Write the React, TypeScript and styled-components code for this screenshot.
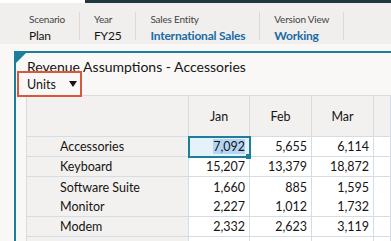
import React from "react";
import styled, { createGlobalStyle } from "styled-components";

const GlobalStyle = createGlobalStyle`
  html, body {
    margin: 0;
    padding: 0;
    background: #f9f8f6;
    font-family: Lato, "Noto Sans", sans-serif;
    color: #161513;
  }
`;

const Page = styled.div`
  height: 241px;
  overflow: hidden;
`;

const TopStrip = styled.div`
  display: flex;
  height: 3px;
`;

const StripLight = styled.div`
  width: 85px;
  background: #ffffff;
`;

const StripDark = styled.div`
  flex: 1;
  background: #22373e;
`;

const PovBar = styled.div`
  display: flex;
  align-items: flex-start;
  height: 32px;
  padding: 9px 0 0 15px;
  background: #f0efed;
`;

const PovItem = styled.div`
  display: flex;
  flex-direction: column;
  height: 28px;
  padding: 0 14px;
  border-right: 1px solid #dcdad6;
`;

const PovLabel = styled.span`
  font-size: 10px;
  line-height: 13px;
  margin-top: 1px;
  letter-spacing: -0.2px;
  color: #444341;
`;

const PovValue = styled.span<{ $link?: boolean }>`
  font-size: 12px;
  line-height: 16px;
  margin-top: 2px;
  letter-spacing: -0.2px;
  font-weight: ${(p) => (p.$link ? 700 : 400)};
  color: ${(p) => (p.$link ? "#1a6aa6" : "#161513")};
`;

const Content = styled.div`
  padding: 7px 0 0 14px;
`;

const Panel = styled.div`
  position: relative;
  border-top: 2px solid #1d7e9c;
  border-left: 2px solid #1d7e9c;
  height: 200px;
`;

const Corner = styled.div`
  position: absolute;
  top: 0;
  left: 0;
  width: 0;
  height: 0;
  border-top: 10px solid #1d7e9c;
  border-right: 10px solid transparent;
`;

const Title = styled.div`
  padding: 5px 0 0 11px;
  font-size: 14px;
  line-height: 18px;
`;

const UnitsBox = styled.div`
  position: relative;
  display: flex;
  align-items: center;
  gap: 13px;
  width: 53px;
  height: 22px;
  margin: -5px 0 0 1px;
  padding-left: 8px;
  border: 2px solid #d9573a;
  background: #f9f8f6;
  font-size: 12.5px;
`;

const Caret = styled.span`
  width: 0;
  height: 0;
  border-left: 4px solid transparent;
  border-right: 4px solid transparent;
  border-top: 6px solid #161513;
`;

const Grid = styled.div`
  display: grid;
  grid-template-columns: 162px 61px 62px 62px 1fr;
  margin: -2px 0 0 10px;
  border-top: 1px solid #d4dde4;
  border-left: 1px solid #d4dde4;
  font-size: 12.5px;
`;

const HeadCell = styled.div`
  display: flex;
  align-items: center;
  justify-content: center;
  height: 40px;
  background: #f2f1ef;
  border-right: 1px solid #d4dde4;
  border-bottom: 1px solid #d4dde4;
`;

const RowHead = styled.div<{ $noLine?: boolean }>`
  display: flex;
  align-items: center;
  height: ${(p) => (p.$noLine ? 20 : 19)}px;
  padding-left: 33px;
  background: #f2f1ef;
  border-right: 1px solid #d4dde4;
  border-bottom: ${(p) => (p.$noLine ? "none" : "1px solid #d4dde4")};
`;

const DataCell = styled.div<{ $noLine?: boolean; $selected?: boolean }>`
  position: relative;
  display: flex;
  align-items: center;
  justify-content: flex-end;
  height: ${(p) => (p.$noLine ? 20 : 19)}px;
  padding-right: 4px;
  background: #ffffff;
  border-right: 1px solid #d4dde4;
  border-bottom: ${(p) => (p.$noLine ? "none" : "1px solid #d4dde4")};
  ${(p) =>
    p.$selected &&
    `
    background: #e5f2f9;
    outline: 2px solid #1d7e9c;
    outline-offset: -1px;
    z-index: 1;
  `}
`;

const Highlight = styled.span`
  background: #b4d5f3;
`;

const Handle = styled.span`
  position: absolute;
  right: -2px;
  bottom: -3px;
  width: 5px;
  height: 5px;
  background: #1d7e9c;
`;

const rows = [
  { name: "Accessories", values: ["7,092", "5,655", "6,114"] },
  { name: "Keyboard", values: ["15,207", "13,379", "18,872"] },
  { name: "Software Suite", values: ["1,660", "885", "1,595"], noLine: true },
  { name: "Monitor", values: ["2,227", "1,012", "1,732"] },
  { name: "Modem", values: ["2,332", "2,623", "3,119"] },
  { name: "Network Card", values: ["7,780", "1,454", "4,880"] },
];

const pov = [
  { label: "Scenario", value: "Plan" },
  { label: "Year", value: "FY25" },
  { label: "Sales Entity", value: "International Sales", link: true },
  { label: "Version View", value: "Working", link: true },
];

export default function App() {
  return (
    <Page>
      <GlobalStyle />
      <TopStrip>
        <StripLight />
        <StripDark />
      </TopStrip>
      <PovBar>
        {pov.map((p) => (
          <PovItem key={p.label}>
            <PovLabel>{p.label}</PovLabel>
            <PovValue $link={p.link}>{p.value}</PovValue>
          </PovItem>
        ))}
      </PovBar>
      <Content>
        <Panel>
          <Corner />
          <Title>Revenue Assumptions - Accessories</Title>
          <UnitsBox>
            Units <Caret />
          </UnitsBox>
          <Grid>
            <HeadCell />
            <HeadCell>Jan</HeadCell>
            <HeadCell>Feb</HeadCell>
            <HeadCell>Mar</HeadCell>
            <HeadCell />
            {rows.map((r, i) => (
              <React.Fragment key={r.name}>
                <RowHead $noLine={r.noLine}>{r.name}</RowHead>
                {r.values.map((v, j) => {
                  const selected = i === 0 && j === 0;
                  return (
                    <DataCell key={j} $noLine={r.noLine} $selected={selected}>
                      {selected ? <Highlight>{v}</Highlight> : v}
                      {selected && <Handle />}
                    </DataCell>
                  );
                })}
                <DataCell $noLine={r.noLine} />
              </React.Fragment>
            ))}
          </Grid>
        </Panel>
      </Content>
    </Page>
  );
}
